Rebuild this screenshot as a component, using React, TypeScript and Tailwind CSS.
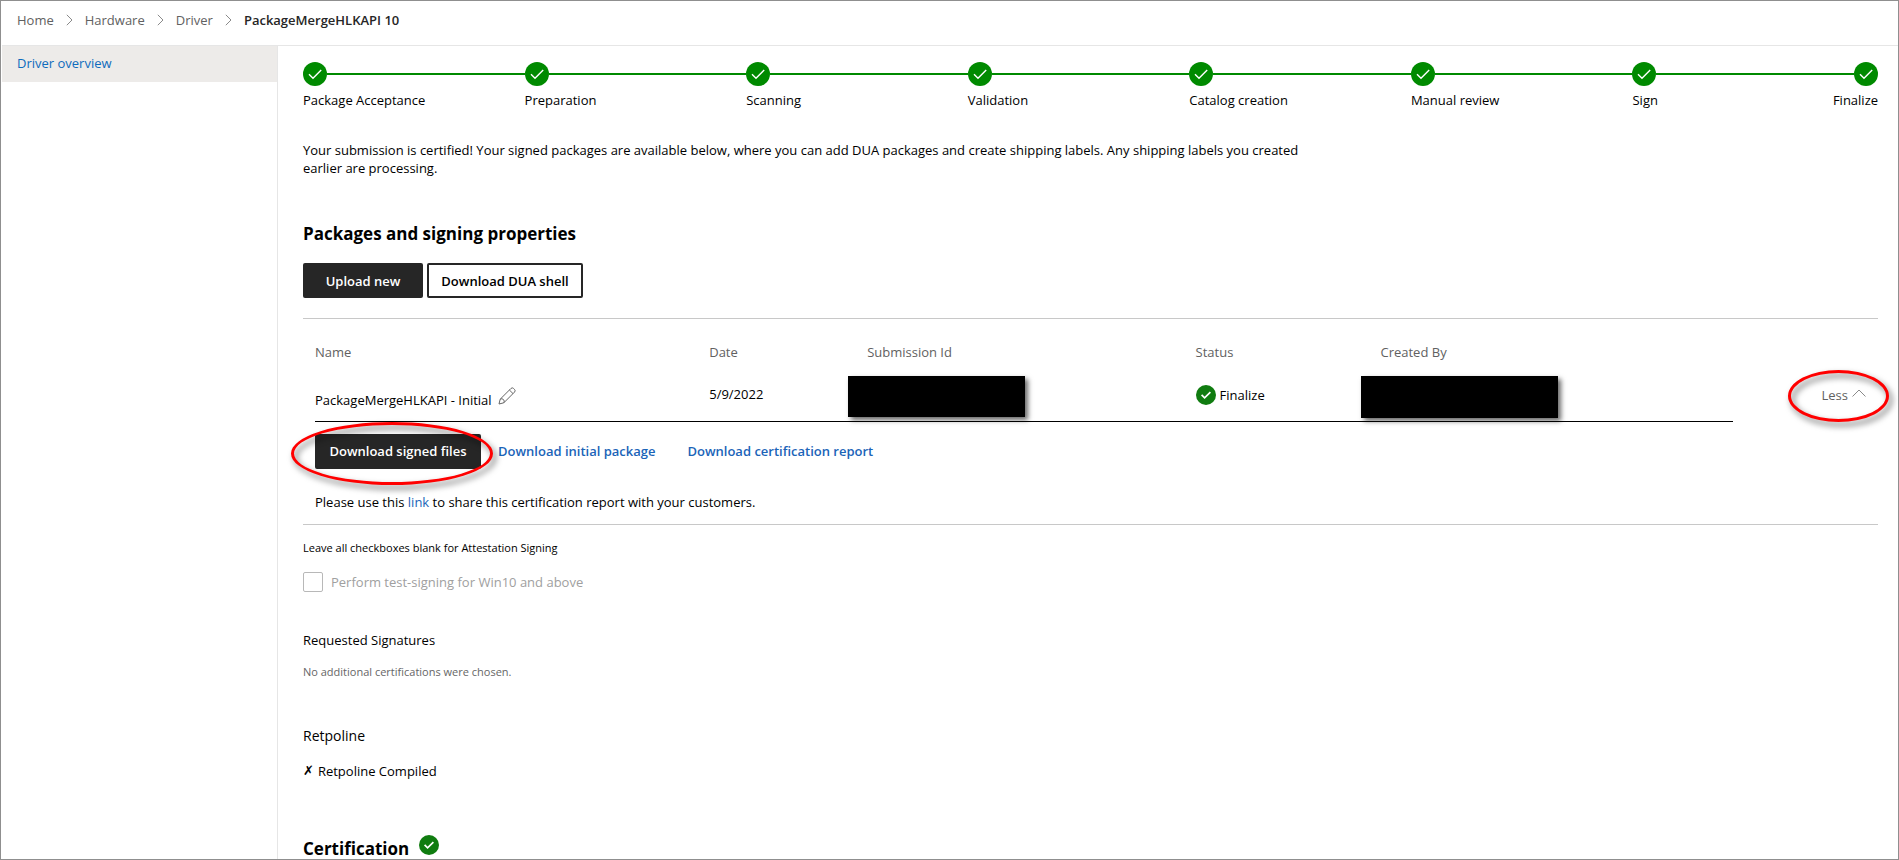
import { useState } from 'react'

interface Crumb {
  label: string
  href: string
}

const crumbs: Crumb[] = [
  { label: 'Home', href: '#home' },
  { label: 'Hardware', href: '#hardware' },
  { label: 'Driver', href: '#driver' },
]

const steps = [
  'Package Acceptance',
  'Preparation',
  'Scanning',
  'Validation',
  'Catalog creation',
  'Manual review',
  'Sign',
  'Finalize',
]

function CrumbChevron() {
  return (
    <svg className="w-[7px] h-3 shrink-0" viewBox="0 0 7 12" fill="none" stroke="#8a8a8a" strokeWidth="1">
      <path d="M0.8 0.8 6 6 0.8 11.2" />
    </svg>
  )
}

function StepCheck() {
  return (
    <svg className="w-6 h-6 shrink-0" viewBox="0 0 24 24" fill="none">
      <circle cx="12" cy="12" r="12" fill="#008a00" />
      <path d="M6 12.3 10 16.3 18.2 8" stroke="#fff" strokeWidth="1.4" />
    </svg>
  )
}

function StatusCheck() {
  return (
    <svg className="w-5 h-5 shrink-0" viewBox="0 0 20 20" fill="none">
      <circle cx="10" cy="10" r="10" fill="#107c10" />
      <path d="M5.6 9.8 8.6 12.8 14.4 7.2" stroke="#fff" strokeWidth="1.7" />
    </svg>
  )
}

function Pencil() {
  return (
    <svg className="w-[18px] h-[18px]" viewBox="0 0 18 18" fill="none" stroke="#666" strokeWidth="1" strokeLinejoin="round">
      <path d="M1 17 2.2 12.2 12.9 1.5a1.9 1.9 0 0 1 2.7 0l0.9 0.9a1.9 1.9 0 0 1 0 2.7L5.8 15.8Z" />
      <path d="M11.4 3 15 6.6M2.2 12.2a2.6 2.6 0 0 1 3.6 3.6" />
    </svg>
  )
}

export default function App() {
  const [expanded, setExpanded] = useState(true)

  return (
    <div className="h-screen overflow-hidden flex flex-col border border-[#8f8f8f] bg-white text-black text-[13px] leading-[18px] font-['Open_Sans','Noto_Sans',sans-serif]">
      {/* Breadcrumb */}
      <header className="shrink-0 h-[45px] ml-px border-b border-[#e6e6e6] px-[15px] pb-1.5 flex items-center">
        <nav aria-label="Breadcrumb" className="flex items-center gap-3 text-[#616161]">
          {crumbs.map((crumb) => (
            <div key={crumb.label} className="flex items-center gap-3">
              <a href={crumb.href}>{crumb.label}</a>
              <CrumbChevron />
            </div>
          ))}
          <span className="font-semibold text-[#262626]">PackageMergeHLKAPI 10</span>
        </nav>
      </header>

      <div className="flex-1 flex min-h-0">
        {/* Sidebar */}
        <aside className="w-[277px] shrink-0 pl-px border-r border-[#e6e6e6]">
          <a href="#overview" className="block bg-[#edebe9] text-[#0f6cbd] px-[15px] pt-2 pb-[10px]">
            Driver overview
          </a>
        </aside>

        <main className="flex-1 min-w-0 pl-[25px] pr-5 pt-4">
          {/* Progress steps */}
          <ol className="flex">
            {steps.map((step, i) => {
              const isLast = i === steps.length - 1
              return (
                <li key={step} className={isLast ? 'w-6 flex flex-col items-end' : 'flex-1'}>
                  <div className="flex items-center">
                    <StepCheck />
                    {!isLast && <div className="flex-1 h-0.5 bg-[#008a00]"></div>}
                  </div>
                  <p className="mt-[5px] whitespace-nowrap">{step}</p>
                </li>
              )
            })}
          </ol>

          <p className="mt-8 max-w-[1020px]">
            Your submission is certified! Your signed packages are available below, where you can add DUA packages and
            create shipping labels. Any shipping labels you created earlier are processing.
          </p>

          {/* Packages */}
          <h2 className="mt-[45px] text-[17px] leading-6 font-bold">Packages and signing properties</h2>
          <div className="mt-[17px] flex gap-1 font-semibold">
            <button className="h-[35px] w-[120px] bg-[#262626] text-white rounded-xs">Upload new</button>
            <button className="h-[35px] w-[156px] border-2 border-[#262626] rounded-xs">Download DUA shell</button>
          </div>

          <section className="mt-5 border-y border-[#c8c8c8] pl-3 pt-6 pb-[13px]">
            <div className="flex">
              <table className="w-[calc(100%-145px)] table-fixed text-left">
                <thead className="text-[#616161]">
                  <tr>
                    <th className="w-[27.8%] font-normal">Name</th>
                    <th className="w-[9.8%] font-normal">Date</th>
                    <th className="w-[24.5%] font-normal pl-[19px]">Submission Id</th>
                    <th className="w-[11.7%] font-normal">Status</th>
                    <th className="font-normal pl-[19px]">Created By</th>
                  </tr>
                </thead>
                <tbody>
                  <tr className="h-[60px] border-b border-black align-bottom">
                    <td className="pb-3">
                      <div className="flex items-end gap-1.5">
                        <span>PackageMergeHLKAPI - Initial</span>
                        <button aria-label="Edit name" className="pb-1">
                          <Pencil />
                        </button>
                      </div>
                    </td>
                    <td className="pb-[18px]">5/9/2022</td>
                    <td className="pb-1">
                      <div className="h-[41px] w-[177px] bg-black shadow-[3px_3px_5px_rgba(0,0,0,0.6)]"></div>
                    </td>
                    <td className="pb-4">
                      <div className="flex items-center gap-1">
                        <StatusCheck />
                        Finalize
                      </div>
                    </td>
                    <td className="pb-[3px]">
                      <div className="h-[42px] w-[197px] bg-black shadow-[3px_3px_5px_rgba(0,0,0,0.6)]"></div>
                    </td>
                  </tr>
                </tbody>
              </table>
              <div className="flex-1 flex justify-end items-end pr-3 pb-[18px]">
                <button
                  onClick={() => setExpanded(!expanded)}
                  className="relative flex items-center gap-1 text-[#616161]"
                >
                  {expanded ? 'Less' : 'More'}
                  <svg
                    className={expanded ? 'w-[14px] h-2 mb-1' : 'w-[14px] h-2 mb-1 rotate-180'}
                    viewBox="0 0 14 8"
                    fill="none"
                    stroke="#8a8a8a"
                  >
                    <path d="M0.5 7.5 7 1 13.5 7.5" />
                  </svg>
                  <span className="absolute -left-[34px] -top-4 w-[101px] h-[52px] border-3 border-[#f00] rounded-[50%] drop-shadow-[3px_4px_3px_rgba(0,0,0,0.6)]"></span>
                </button>
              </div>
            </div>

            {expanded && (
              <>
                <div className="mt-3 flex items-center font-semibold text-[#1b64b8]">
                  <button className="relative h-[35px] w-[166px] bg-[#262626] text-white rounded-xs">
                    Download signed files
                    <span className="absolute -left-6 -top-3 w-[202px] h-[63px] border-3 border-[#f00] rounded-[50%] drop-shadow-[3px_4px_3px_rgba(0,0,0,0.6)]"></span>
                  </button>
                  <a href="#initial" className="ml-[17px]">
                    Download initial package
                  </a>
                  <a href="#report" className="ml-8">
                    Download certification report
                  </a>
                </div>
                <p className="mt-6">
                  Please use this{' '}
                  <a href="#share" className="text-[#1b64b8]">
                    link
                  </a>{' '}
                  to share this certification report with your customers.
                </p>
              </>
            )}
          </section>

          {/* Signing options */}
          <p className="mt-[14px] text-[11px]">Leave all checkboxes blank for Attestation Signing</p>
          <div className="mt-[15px] flex items-center gap-2 text-[#a0a0a0]">
            <input
              id="test-signing"
              type="checkbox"
              disabled
              className="appearance-none w-5 h-5 border border-[#b8b8b8] rounded-xs bg-white"
            />
            <label htmlFor="test-signing">Perform test-signing for Win10 and above</label>
          </div>

          <h3 className="mt-[39px]">Requested Signatures</h3>
          <p className="mt-[14px] text-[11px] text-[#666]">No additional certifications were chosen.</p>

          <h3 className="mt-[46px] text-sm leading-[18px] font-medium">Retpoline</h3>
          <p className="mt-[17px] flex gap-1">
            <span className="font-['DejaVu_Sans']">✗</span>
            Retpoline Compiled
          </p>

          <div className="mt-[55px] flex items-start gap-[10px]">
            <h2 className="pt-0.5 text-[17px] leading-6 font-bold">Certification</h2>
            <StatusCheck />
          </div>
        </main>
      </div>
    </div>
  )
}
